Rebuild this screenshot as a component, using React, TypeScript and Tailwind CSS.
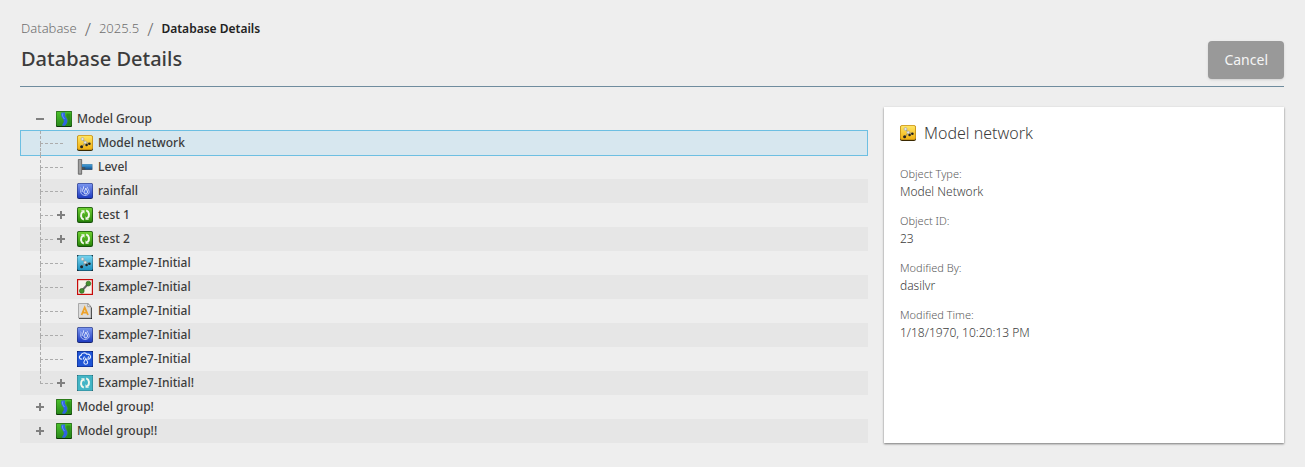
import React, { useState } from "react";

type IconName =
  | "group"
  | "network"
  | "level"
  | "rainfall"
  | "run"
  | "inference"
  | "selection"
  | "label"
  | "waste"
  | "sim";

interface TreeNode {
  id: number;
  name: string;
  icon: IconName;
  expandable?: boolean;
  children?: TreeNode[];
}

const tree: TreeNode[] = [
  {
    id: 1,
    name: "Model Group",
    icon: "group",
    expandable: true,
    children: [
      { id: 23, name: "Model network", icon: "network" },
      { id: 24, name: "Level", icon: "level" },
      { id: 25, name: "rainfall", icon: "rainfall" },
      { id: 26, name: "test 1", icon: "run", expandable: true },
      { id: 27, name: "test 2", icon: "run", expandable: true },
      { id: 28, name: "Example7-Initial", icon: "inference" },
      { id: 29, name: "Example7-Initial", icon: "selection" },
      { id: 30, name: "Example7-Initial", icon: "label" },
      { id: 31, name: "Example7-Initial", icon: "rainfall" },
      { id: 32, name: "Example7-Initial", icon: "waste" },
      { id: 33, name: "Example7-Initial!", icon: "sim", expandable: true },
    ],
  },
  { id: 2, name: "Model group!", icon: "group", expandable: true },
  { id: 3, name: "Model group!!", icon: "group", expandable: true },
];

const details = [
  { label: "Object Type:", value: "Model Network" },
  { label: "Object ID:", value: "23" },
  { label: "Modified By:", value: "dasilvr" },
  { label: "Modified Time:", value: "1/18/1970, 10:20:13 PM" },
];

function Gradients() {
  const stops: [string, string, string][] = [
    ["g-green", "#4cc22c", "#2a8a1c"],
    ["g-yellow", "#ffe766", "#f0b010"],
    ["g-blue", "#7c97f0", "#1f3cc0"],
    ["g-run", "#6ed032", "#2c8a0c"],
    ["g-cyan", "#7ad6f0", "#1c90c0"],
    ["g-pipe", "#49a5e0", "#0f4f8c"],
  ];
  return (
    <svg className="absolute h-0 w-0" aria-hidden="true">
      <defs>
        {stops.map(([id, from, to]) => (
          <linearGradient key={id} id={id} x1="0" y1="0" x2="0" y2="1">
            <stop offset="0" stopColor={from} />
            <stop offset="1" stopColor={to} />
          </linearGradient>
        ))}
      </defs>
    </svg>
  );
}

const networkShape = (
  <>
    <path d="M5.5 4 8.2 7.5 5 12M8.2 7.5l4 1" fill="none" stroke="#8a8a80" />
    <circle cx="5.5" cy="4" r="1.5" fill="#e4e4e4" stroke="#999" strokeWidth=".5" />
    <circle cx="8.2" cy="7.4" r="1.4" fill="#e4e4e4" stroke="#999" strokeWidth=".5" />
    <circle cx="4.6" cy="11.8" r="1.5" fill="#222" />
    <circle cx="9.6" cy="10" r="1.3" fill="#222" />
    <circle cx="12.4" cy="8.7" r="1.3" fill="#222" />
  </>
);

const arrowsShape = (
  <>
    <path d="M6.8 12.6C3.6 11.5 3 7.2 5.6 4.8M9.2 3.4c3.2 1.1 3.8 5.4 1.2 7.8" fill="none" stroke="#f4f8ee" strokeWidth="2" />
    <path d="M4 3.2h3.5v3.6zM12 12.8H8.5V9.2z" fill="#f4f8ee" />
  </>
);

const shapes: Record<IconName, React.ReactNode> = {
  group: (
    <>
      <rect width="16" height="16" rx="1" fill="#0c3507" />
      <rect x=".4" y=".4" width="15.2" height="14.6" rx="1" fill="url(#g-green)" />
      <path d="M10.5 2.5h4v11h-3c1.6-2.6 1-4.6-.4-6.6-.9-1.4-1.1-2.6-.6-4.4z" fill="#1f7a16" opacity=".6" />
      <path d="M5.6 1.6h3.8C8.4 3.8 9 5.2 10.4 7c1.8 2.4 1.2 5-1.4 7.8H6.4c-.6-1.8 1.8-2.6 1.4-5C7.4 7.6 3.8 5.2 5.6 1.6z" fill="#2f62e4" />
      <path d="M6.8 2.4C6 5 7.2 6.2 8.4 8" fill="none" stroke="#6c9cff" />
    </>
  ),
  network: (
    <>
      <rect y=".5" width="16" height="15.5" rx="2" fill="#3a2800" />
      <rect x=".5" y=".5" width="15" height="14" rx="1.5" fill="url(#g-yellow)" stroke="#d9a01c" strokeWidth=".8" />
      {networkShape}
    </>
  ),
  level: (
    <>
      <path d="M1.2.5H5V5h10.3v6H5v4.5H1.2z" fill="#666" />
      <path d="M1.3.5h3.4V15H1.3z" fill="#a0a0a0" stroke="#666" strokeWidth=".7" />
      <path d="M5 5.3h10.3v5.2H8L5 8z" fill="url(#g-pipe)" />
      <path d="M5 8h3.3v3H5z" fill="#444" opacity=".6" />
    </>
  ),
  rainfall: (
    <>
      <rect width="16" height="16" rx="2" fill="#17246e" />
      <rect x=".5" y=".5" width="15" height="14.5" rx="1.5" fill="url(#g-blue)" />
      <path d="M3.6 4.6c1 .8-.2 3 .2 4.8.9 3.8 7.3 4 8.3.4.6-2.2-1.2-3.2-2-6" fill="none" stroke="#b9c8fa" />
      <path d="M6.6 3.4C7 5.6 5 6.8 5.2 8.8" fill="none" stroke="#dfe7ff" />
      <path d="M8.8 5.2c.6 1.8 2 2.6 1.8 4.2-.2 2-3.4 2-3.6 0-.2-1.4 1.4-2.2 1.8-4.2z" fill="#5a7ce8" stroke="#f4f7ff" />
    </>
  ),
  run: (
    <>
      <rect width="16" height="16" rx="2" fill="#16520a" />
      <rect x=".8" y=".8" width="14.4" height="14" rx="1.5" fill="url(#g-run)" />
      {arrowsShape}
    </>
  ),
  inference: (
    <>
      <rect width="16" height="16" fill="#0e2d3c" />
      <rect x=".3" y=".2" width="15.4" height="15.4" rx="2" fill="url(#g-cyan)" />
      {networkShape}
    </>
  ),
  selection: (
    <>
      <rect x=".6" y=".6" width="14.8" height="14.8" fill="#f7f4ea" stroke="#c80a0a" strokeWidth="1.2" />
      <path d="m4.5 12 7-7.5" stroke="#666" strokeWidth="2" />
      <circle cx="4.8" cy="11.9" r="2.4" fill="#46902e" stroke="#215b12" strokeWidth=".6" />
      <circle cx="11.4" cy="4.6" r="2.4" fill="#46902e" stroke="#215b12" strokeWidth=".6" />
    </>
  ),
  label: (
    <>
      <path d="M2 1h9l4 4v11H2z" fill="#222" />
      <path d="M1.5.5h9.3L14 3.7V15H1.5z" fill="#dcdcdc" stroke="#999" strokeWidth=".8" />
      <path d="M10.8.5v3.2H14z" fill="#fff" stroke="#666" strokeWidth=".6" />
      <path d="M4.6 12 7.7 4.5 11 12M5.8 9.6h3.8" fill="none" stroke="#eda128" strokeWidth="1.8" />
    </>
  ),
  waste: (
    <>
      <rect width="16" height="16" fill="#0c1e70" />
      <rect x=".4" y=".4" width="15.2" height="15.2" rx="1.5" fill="#1f55d6" />
      <path d="M5 8C2.2 8.6 1.4 5 4 4.4 4.4 1.6 8.6 1.2 9.8 3.2c2.6-.8 5 2.2 3 4.3-.7.7-1.8.6-2.6.5" fill="none" stroke="#e8f0ff" strokeWidth="1.2" />
      <path d="M8.8 7.6c-1 2-2.2 3-1.9 4.3.5 1.8 3.2 1.8 3.7 0 .3-1.3-.8-2.3-1.8-4.3zM7.5 5.5 6 8.5M11.6 5.4l-.7 2" fill="none" stroke="#e8f0ff" strokeWidth="1.1" />
    </>
  ),
  sim: (
    <>
      <rect width="16" height="16" fill="#1f4e58" />
      <rect x=".3" y=".3" width="15.4" height="15.4" rx="1" fill="#43b5c6" />
      {arrowsShape}
    </>
  ),
};

function NodeIcon({ name }: { name: IconName }) {
  return (
    <svg viewBox="0 0 16 16" className="h-4 w-4 shrink-0" aria-hidden="true">
      {shapes[name]}
    </svg>
  );
}

function Toggle({ open, name, onClick }: { open: boolean; name: string; onClick: () => void }) {
  return (
    <button
      type="button"
      aria-label={`${open ? "Collapse" : "Expand"} ${name}`}
      onClick={onClick}
      className="mr-2 flex h-4 w-4 items-center justify-center text-[#808080]"
    >
      <svg viewBox="0 0 16 16" className="h-4 w-4" stroke="currentColor" strokeWidth="2">
        <path d={open ? "M4 8h8" : "M4 8h8M8 4v8"} />
      </svg>
    </button>
  );
}

// Dashed connector between a child row and its parent
function Guide({ last, short }: { last: boolean; short: boolean }) {
  return (
    <span className={`flex h-6 flex-col ${short ? "w-[13px]" : "mr-[14px] w-[23px]"}`}>
      <span className="h-[13px] border-b border-l border-dashed border-[#acacac]" />
      {!last && <span className="flex-1 border-l border-dashed border-[#acacac]" />}
    </span>
  );
}

export default function App() {
  const [selectedId, setSelectedId] = useState(23);
  const [openIds, setOpenIds] = useState<number[]>([1]);

  const toggle = (id: number) => {
    setOpenIds((ids) => (ids.includes(id) ? ids.filter((i) => i !== id) : [...ids, id]));
  };

  const rows = tree.flatMap((node) => [
    { node, child: false, last: false },
    ...(openIds.includes(node.id) ? node.children ?? [] : []).map((c, i, all) => ({
      node: c,
      child: true,
      last: i === all.length - 1,
    })),
  ]);

  return (
    <div className="min-h-screen bg-[#eeeeee] px-5 pt-5 pb-6 font-['Noto_Sans','Open_Sans',sans-serif] text-[#3c3c3c]">
      <Gradients />
      <header className="mr-px flex items-end justify-between border-b border-[#6f8c9e] pb-[7px]">
        <div className="pb-2 pl-px">
          <nav aria-label="Breadcrumb" className="flex h-[18px] items-center gap-2 text-[13px] text-[#6e6e6e]">
            <a href="#database" className="font-light">Database</a>
            <span className="text-lg font-light">/</span>
            <a href="#version" className="font-light">2025.5</a>
            <span className="text-lg font-light">/</span>
            <span className="text-xs font-semibold text-[#222222]">Database Details</span>
          </nav>
          <h1 className="mt-[9px] text-xl leading-6 font-medium">Database Details</h1>
        </div>
        <button
          type="button"
          className="h-[38px] rounded bg-[#999999] px-4 text-sm font-normal text-[#f5f5f5] shadow"
        >
          Cancel
        </button>
      </header>

      <main className="mt-5 mr-px flex gap-4">
        <ul className="flex-1">
          {rows.map(({ node, child, last }, index) => {
            const selected = node.id === selectedId;
            return (
              <li
                key={node.id}
                className={`flex items-center border-x ${child ? "pl-[19px]" : "pl-[11px]"} ${
                  selected
                    ? "-my-px h-[26px] border-y border-[#6dbfe2] bg-[#d7e7ef]"
                    : `h-6 border-transparent ${index % 2 ? "bg-[#e6e6e6]" : ""}`
                }`}
              >
                {child && <Guide last={last} short={!!node.expandable} />}
                {node.expandable && (
                  <Toggle open={openIds.includes(node.id)} name={node.name} onClick={() => toggle(node.id)} />
                )}
                <button
                  type="button"
                  onClick={() => setSelectedId(node.id)}
                  className="flex flex-1 items-center gap-[5px] text-left text-xs font-medium"
                >
                  <NodeIcon name={node.icon} />
                  {node.name}
                </button>
              </li>
            );
          })}
        </ul>

        <aside className="w-[400px] bg-white p-4 shadow-[0_1px_2px_rgba(0,0,0,0.5)]">
          <h2 className="flex items-center gap-2 text-base leading-5 font-light">
            <NodeIcon name="network" />
            Model network
          </h2>
          <dl className="mt-[22px] flex flex-col gap-3">
            {details.map((item) => (
              <div key={item.label}>
                <dt className="text-[11px] leading-[18px] font-light text-[#5c5c5c]">{item.label}</dt>
                <dd className="text-xs leading-[17px] font-light">{item.value}</dd>
              </div>
            ))}
          </dl>
        </aside>
      </main>
    </div>
  );
}
